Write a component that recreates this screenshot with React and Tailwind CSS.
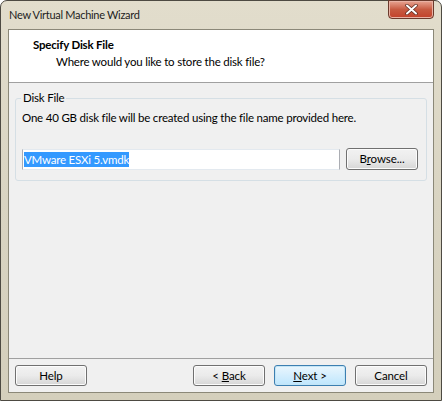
import React from 'react';

const font = { fontFamily: '"Segoe UI", Lato, "Noto Sans", sans-serif' };

const Btn = ({ children, className = '', focused = false }) => (
  <div
    className={`w-[72px] h-[21px] flex items-center justify-center rounded-[3px] border text-[11.5px] tracking-[-0.1px] text-black ${
      focused
        ? 'border-[#3c7fb1] bg-gradient-to-b from-[#eaf6fd] to-[#bee6fd] shadow-[inset_0_0_0_1px_#c4e5f6]'
        : 'border-[#707070] bg-gradient-to-b from-[#f2f2f2] via-[#ebebeb] to-[#d6d6d6] shadow-[inset_0_0_0_1px_#fcfcfc]'
    } ${className}`}
  >
    {children}
  </div>
);

const App = () => (
  <div style={font} className="w-[442px] h-[401px] bg-white">
    <div className="w-[442px] h-[401px] flex flex-col rounded-t-[7px] border border-[#4d4a42] bg-gradient-to-b from-[#e2ddcc] via-[#d9d4c2] to-[#d4cfbc] px-[7px] pb-[7px]">
      <div className="h-[28px] flex items-start justify-between">
        <span className="pt-[6px] pl-[1px] text-[11px] tracking-[-0.3px] text-[#1d1d1d] leading-[16px]">New Virtual Machine Wizard</span>
        <div className="w-[46px] h-[19px] -mt-[1px] rounded-b-[4px] border border-[#6b3a2c] bg-gradient-to-b from-[#e8a593] via-[#c75a41] to-[#c2412a] flex items-center justify-center shadow-[inset_0_0_0_1px_#e9b2a4]">
          <svg width="13" height="11" viewBox="0 0 13 11">
            <path d="M2 1.5 L11 9.5 M11 1.5 L2 9.5" stroke="#5a2a1f" strokeWidth="3.4" strokeLinecap="round" />
            <path d="M2 1.5 L11 9.5 M11 1.5 L2 9.5" stroke="#ffffff" strokeWidth="2" strokeLinecap="round" />
          </svg>
        </div>
      </div>
      <div className="flex-1 flex flex-col border border-[#8b8878] bg-[#f0f0f0] text-[11.5px] tracking-[-0.2px]">
        <div className="h-[53px] bg-white border-b border-[#a0a0a0] pt-[7px] pl-[24px]">
          <div className="font-bold text-black leading-[16px]">Specify Disk File</div>
          <div className="text-black leading-[16px] pl-[23px] mt-[1px]">Where would you like to store the disk file?</div>
        </div>
        <div className="px-[6px] pt-[15px]">
          <div className="relative h-[83px] rounded-[3px] border border-[#d5dfe5] pl-[6px] pr-[8px] pt-[11px]">
            <span className="absolute -top-[9px] left-[5px] bg-[#f0f0f0] px-[2px] text-black leading-[16px]">Disk File</span>
            <div className="text-black leading-[16px]">One 40 GB disk file will be created using the file name provided here.</div>
            <div className="mt-[22px] flex items-center gap-[6px]">
              <div className="flex-1 h-[21px] bg-white border border-[#abadb3] border-t-[#e3e9ef] border-b-[#e3e9ef] flex items-center pl-[1px]">
                <span className="bg-[#3399ff] text-white leading-[15px]">VMware ESXi 5.vmdk</span>
              </div>
              <Btn className="h-[22px]">
                <span>B<span className="underline">r</span>owse...</span>
              </Btn>
            </div>
          </div>
        </div>
        <div className="flex-1" />
        <div className="border-t border-[#a0a0a0] h-[34px] flex items-center px-[6px]">
          <Btn>Help</Btn>
          <div className="flex-1" />
          <div className="flex gap-[9px]">
            <Btn><span>{'< '}<span className="underline">B</span>ack</span></Btn>
            <Btn focused><span><span className="underline">N</span>ext &gt;</span></Btn>
            <Btn>Cancel</Btn>
          </div>
        </div>
      </div>
    </div>
  </div>
);

export default App;
